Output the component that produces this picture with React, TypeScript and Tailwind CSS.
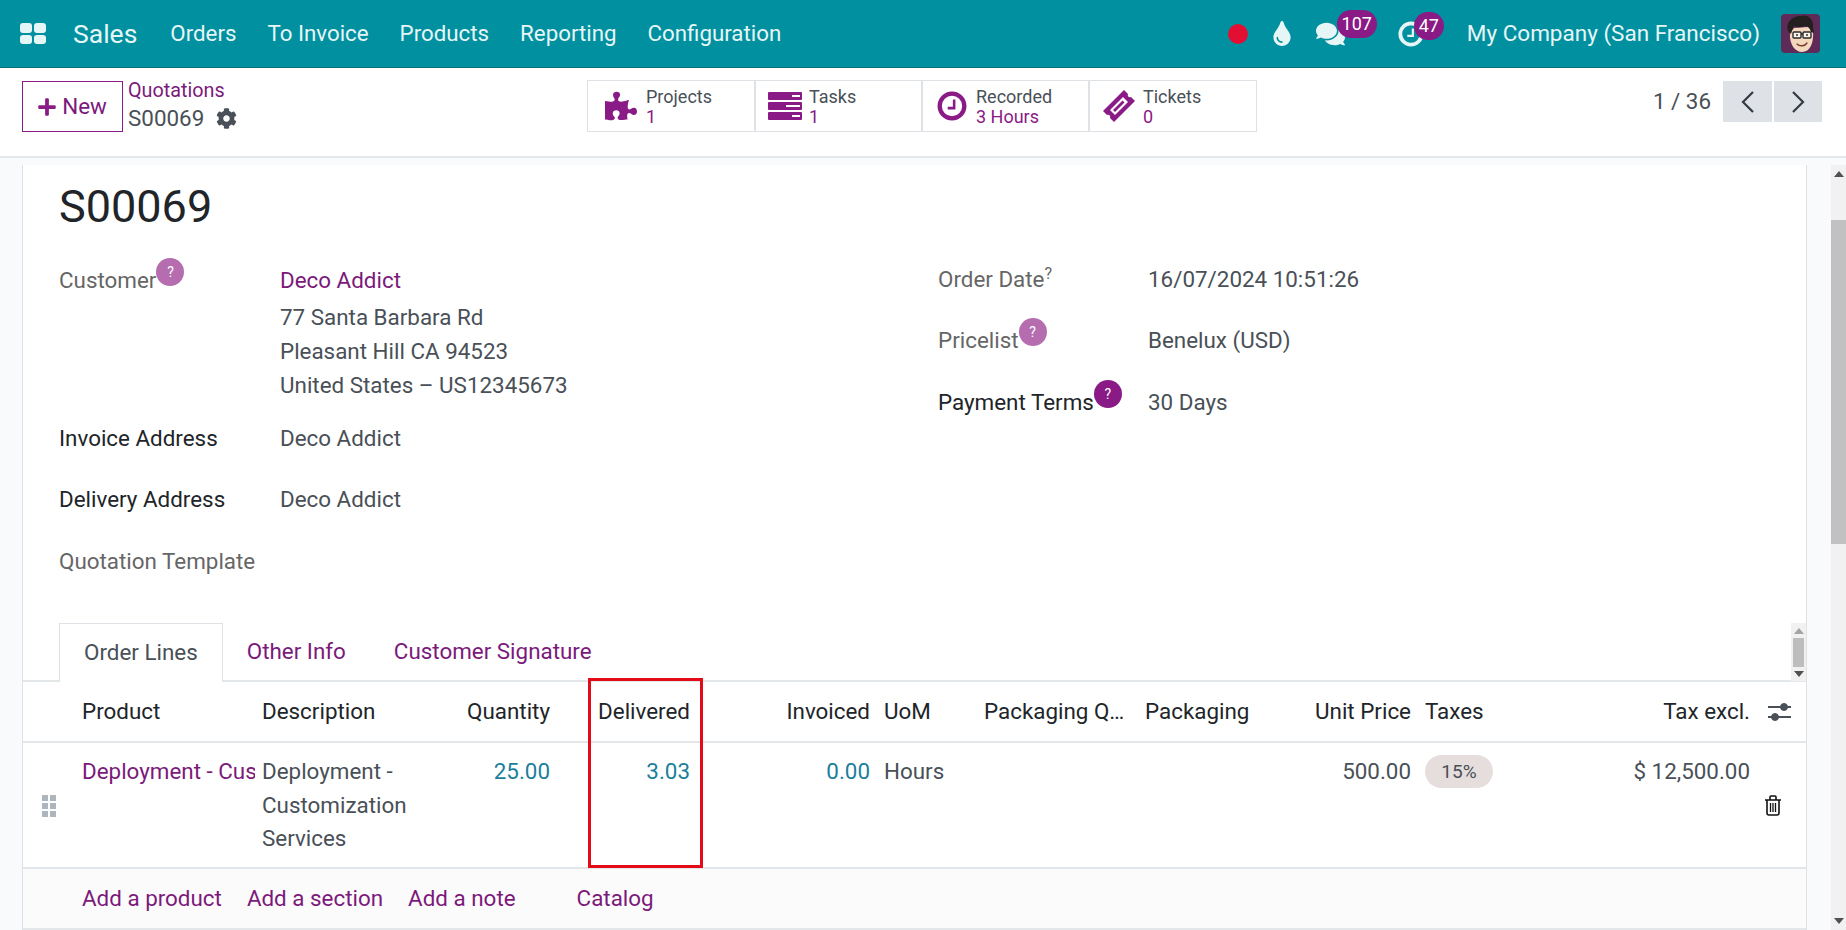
import { FaCog, FaComments, FaPlus, FaPuzzlePiece, FaTint } from "react-icons/fa";

const navItems = ["Orders", "To Invoice", "Products", "Reporting", "Configuration"];

function AppsIcon() {
  return (
    <div className="grid w-[26px] h-[21px] grid-cols-2 gap-[2px]">
      <span className="rounded-[3px] bg-[#e6f6f7]" />
      <span className="rounded-[3px] bg-[#e6f6f7]" />
      <span className="rounded-[3px] bg-[#e6f6f7]" />
      <span className="rounded-[3px] bg-[#e6f6f7]" />
    </div>
  );
}

function Avatar() {
  return (
    <svg viewBox="0 0 39 39" className="w-[39px] h-[39px]">
      <rect width="39" height="39" rx="4" fill="#5e2a58" />
      <path d="M9 19 C8 30 14 38 21 38 C29 38 33 29 32 17 L27 13 L13 14 Z" fill="#f4d8bd" />
      <path d="M7 17 C4 8 12 1 21 2 C26 0 33 5 32 13 L33 19 L30 18 C29 14 27 12 24 12 C20 14 15 13 13 12 C12 14 11 16 10 20 Z" fill="#23201f" />
      <rect x="12" y="18" width="8" height="6" rx="1" fill="#f8f3ea" stroke="#2a2a2a" strokeWidth="1.4" />
      <rect x="22" y="18" width="8" height="6" rx="1" fill="#f8f3ea" stroke="#2a2a2a" strokeWidth="1.4" />
      <path d="M20 20 H22" stroke="#2a2a2a" strokeWidth="1.4" />
      <circle cx="16" cy="21" r="1" fill="#333" />
      <circle cx="26" cy="21" r="1" fill="#333" />
      <path d="M16 30 C19 33 24 32 26 29" stroke="#7a3b2e" strokeWidth="1.4" fill="none" strokeLinecap="round" />
    </svg>
  );
}

function TasksIcon() {
  return (
    <svg viewBox="0 0 34 28" className="w-[34px] h-[28px]" fill="#8a1a85">
      <path fillRule="evenodd" d="M1 0 H33 a1 1 0 0 1 1 1 V7 a1 1 0 0 1 -1 1 H1 a1 1 0 0 1 -1 -1 V1 a1 1 0 0 1 1 -1 Z M24 3 V5 H32 V3 Z" />
      <path fillRule="evenodd" d="M1 10 H33 a1 1 0 0 1 1 1 V17 a1 1 0 0 1 -1 1 H1 a1 1 0 0 1 -1 -1 V11 a1 1 0 0 1 1 -1 Z M18 13 V15 H32 V13 Z" />
      <path fillRule="evenodd" d="M1 20 H33 a1 1 0 0 1 1 1 V27 a1 1 0 0 1 -1 1 H1 a1 1 0 0 1 -1 -1 V21 a1 1 0 0 1 1 -1 Z M24 23 V25 H32 V23 Z" />
    </svg>
  );
}

function ClockIcon({ color, className }: { color: string; className: string }) {
  return (
    <svg viewBox="0 0 28 28" className={className} fill="none" stroke={color}>
      <circle cx="14" cy="14" r="11.5" strokeWidth="4" />
      <path d="M16 8 V16 H10" strokeWidth="2.4" />
    </svg>
  );
}

function TicketIcon() {
  return (
    <svg viewBox="0 0 34 34" className="w-[34px] h-[34px]">
      <path
        fill="#8a1a85"
        fillRule="evenodd"
        d="M22 1 L26 5 C25 7 27 9 29 8 L33 12 L12 33 L8 29 C9 27 7 25 5 26 L1 22 Z M21 8 L8 21 L13 26 L26 13 Z"
      />
      <path fill="#8a1a85" d="M20.5 11.5 L11 21 L13 23 L22.5 13.5 Z" />
    </svg>
  );
}

function StatButton({
  icon,
  label,
  value,
  tight,
  className,
}: {
  icon: React.ReactNode;
  label: string;
  value: string;
  tight?: boolean;
  className: string;
}) {
  return (
    <div className={`flex h-full items-center border-r-2 border-[#dee2e6] last:border-r-0 ${className}`}>
      <div className="flex w-[58px] shrink-0 justify-center">{icon}</div>
      <div className={`flex flex-col pt-[2px] text-[18px] leading-[20px] ${tight ? "-ml-[5px]" : ""}`}>
        <span className="text-[#495057]">{label}</span>
        <span className="text-[#8a1a85]">{value}</span>
      </div>
    </div>
  );
}

function HelpBadge({ light }: { light?: boolean }) {
  return (
    <span
      className={`inline-flex h-[28px] w-[28px] -translate-y-[11px] items-center justify-center rounded-full text-[14px] text-white ${
        light ? "bg-[#b56db0]" : "bg-[#8a1a85]"
      }`}
    >
      ?
    </span>
  );
}

function Cell({ className, children }: { className?: string; children?: React.ReactNode }) {
  return <div className={`px-[7px] ${className ?? ""}`}>{children}</div>;
}

function Triangle({ up, className }: { up?: boolean; className?: string }) {
  return (
    <svg viewBox="0 0 10 6" className={`w-[10px] h-[6px] ${className ?? ""}`} fill="currentColor">
      <path d={up ? "M5 0 L10 6 H0 Z" : "M0 0 H10 L5 6 Z"} />
    </svg>
  );
}

const columns =
  "grid grid-cols-[52px_180px_170px_132px_140px_180px_100px_161px_152px_128px_110px_229px_50px]";

export default function App() {
  return (
    <div className="flex h-[930px] w-[1846px] flex-col overflow-hidden bg-white font-['Roboto',sans-serif] text-[22.4px] text-[#495057]">
      {/* top navbar */}
      <header className="flex h-[68px] shrink-0 items-center border-b border-[#00707c] bg-[#00909f] pl-[20px] text-[#e6f6f7]">
        <AppsIcon />
        <span className="ml-[27px] mr-[33px] text-[26.5px]">Sales</span>
        <nav className="flex gap-[31px] text-[22.3px]">
          {navItems.map((item) => (
            <span key={item}>{item}</span>
          ))}
        </nav>
        <div className="ml-auto flex items-center pr-[26px]">
          <span className="-mr-[1px] h-[20px] w-[20px] rounded-full bg-[#e30f33]" />
          <FaTint className="ml-[26px] h-[25px] w-[18px]" />
          <div className="relative ml-[25px] h-[26px] w-[29px]">
            <FaComments className="h-[26px] w-[29px]" />
            <span className="absolute -top-[11px] left-[21px] flex h-[28px] w-[40px] items-center justify-center rounded-full bg-[#8a1a85] text-[18px] text-white">
              107
            </span>
          </div>
          <div className="relative ml-[53px] h-[26px] w-[26px]">
            <ClockIcon color="#e6f6f7" className="h-[26px] w-[26px]" />
            <span className="absolute -top-[9px] left-[16px] flex h-[28px] w-[30px] items-center justify-center rounded-full bg-[#8a1a85] text-[18px] text-white">
              47
            </span>
          </div>
          <span className="ml-[43px] mr-[21px] text-[22.5px]">My Company (San Francisco)</span>
          <Avatar />
        </div>
      </header>

      {/* control panel */}
      <div className="relative flex h-[90px] shrink-0 items-start border-b-2 border-[#e4e7ea] bg-white pl-[22px] pt-[13px]">
        <button className="flex h-[51px] w-[101px] items-center justify-center gap-[5px] border border-[#8a1a85] pr-[1px] text-[22.4px] text-[#7b1a7b]">
          <FaPlus className="h-[20px] w-[20px] text-[#8a1a85]" />
          New
        </button>
        <div className="ml-[5px] -mt-[2px] flex flex-col">
          <a className="text-[19.8px] leading-[24px] text-[#7b1a7b]">Quotations</a>
          <div className="mt-[1px] flex items-center gap-[12px] leading-[28px]">
            S00069
            <FaCog className="h-[21px] w-[21px]" />
          </div>
        </div>
        <div className="absolute left-[587px] top-[12px] flex h-[52px] w-[670px] border border-[#dee2e6]">
          <StatButton className="w-[168px]" icon={<FaPuzzlePiece className="ml-[7px] h-[32px] w-[32px] text-[#8a1a85]" />} label="Projects" value="1" />
          <StatButton className="w-[167px]" tight icon={<TasksIcon />} label="Tasks" value="1" />
          <StatButton className="w-[167px]" tight icon={<ClockIcon color="#8a1a85" className="h-[30px] w-[30px]" />} label="Recorded" value="3 Hours" />
          <StatButton className="w-[166px]" tight icon={<TicketIcon />} label="Tickets" value="0" />
        </div>
        <div className="ml-auto mr-[24px] flex items-center">
          <span className="mr-[12px]">1 / 36</span>
          <div className="flex gap-[2px]">
            <div className="flex h-[41px] w-[49px] items-center justify-center bg-[#dee2e6]">
              <svg viewBox="0 0 14 24" className="h-[24px] w-[14px]" fill="none" stroke="#343a40" strokeWidth="2.2">
                <path d="M12 2 L2 12 L12 22" />
              </svg>
            </div>
            <div className="flex h-[41px] w-[48px] items-center justify-center bg-[#dee2e6]">
              <svg viewBox="0 0 14 24" className="h-[24px] w-[14px]" fill="none" stroke="#343a40" strokeWidth="2.2">
                <path d="M2 2 L12 12 L2 22" />
              </svg>
            </div>
          </div>
        </div>
      </div>

      {/* content + page scrollbar */}
      <div className="flex min-h-0 flex-1 bg-[#f9fafb] pt-[7px]">
        <main className="ml-[22px] mr-[24px] w-[1785px] shrink-0 overflow-hidden border-x border-[#dee2e6] bg-white">
          <h1 className="pl-[36px] pt-[16px] text-[45px] leading-[52px] text-[#212529]">S00069</h1>

          <div className="mt-[29px] flex pl-[36px]">
            {/* left fields */}
            <div className="w-[879px]">
              <div className="flex">
                <div className="w-[221px] leading-[36px] text-[#666]">
                  Customer
                  <HelpBadge light />
                </div>
                <div>
                  <div className="leading-[36px] text-[#7b1a7b]">Deco Addict</div>
                  <div className="mt-[2px] leading-[34px]">
                    <div>77 Santa Barbara Rd</div>
                    <div>Pleasant Hill CA 94523</div>
                    <div>United States – US12345673</div>
                  </div>
                </div>
              </div>
              <div className="mt-[18px] flex leading-[36px]">
                <div className="w-[221px] text-[#212529]">Invoice Address</div>
                <div>Deco Addict</div>
              </div>
              <div className="mt-[25px] flex leading-[36px]">
                <div className="w-[221px] text-[#212529]">Delivery Address</div>
                <div>Deco Addict</div>
              </div>
              <div className="mt-[26px] leading-[36px] text-[#666]">Quotation Template</div>
            </div>
            {/* right fields */}
            <div className="-mt-[1px]">
              <div className="flex leading-[36px]">
                <div className="w-[210px] text-[#666]">
                  Order Date<sup className="text-[16px]">?</sup>
                </div>
                <div>16/07/2024 10:51:26</div>
              </div>
              <div className="mt-[25px] flex leading-[36px]">
                <div className="w-[210px] text-[#666]">
                  Pricelist
                  <HelpBadge light />
                </div>
                <div>Benelux (USD)</div>
              </div>
              <div className="mt-[26px] flex leading-[36px]">
                <div className="w-[210px] text-[#212529]">
                  Payment Terms
                  <HelpBadge />
                </div>
                <div>30 Days</div>
              </div>
            </div>
          </div>

          {/* tabs */}
          <div className="relative mt-[44px] flex h-[59px] border-b-2 border-[#e4e7ea] pl-[36px]">
            <div className="flex h-[59px] items-center border-x border-t border-[#dee2e6] bg-white px-[24px]">Order Lines</div>
            <div className="flex items-center pl-[24px] pr-[24px] pt-[1px] text-[#7b1a7b]">Other Info</div>
            <div className="flex items-center pl-[24px] pt-[1px] text-[#7b1a7b]">Customer Signature</div>
            <div className="absolute right-0 top-0 flex h-[58px] w-[15px] flex-col items-center bg-[#f1f1f1] pt-[5px]">
              <Triangle up className="text-[#a3a3a3]" />
              <div className="mt-[4px] h-[29px] w-[11px] bg-[#bdbdbd]" />
              <Triangle className="mt-[4px] text-[#505050]" />
            </div>
          </div>

          {/* order lines */}
          <div className="relative">
            <div className={`${columns} h-[61px] items-center border-b-2 border-[#e4e7ea] text-[#212529]`}>
              <Cell />
              <Cell>Product</Cell>
              <Cell>Description</Cell>
              <Cell className="text-right">Quantity</Cell>
              <Cell className="text-right">Delivered</Cell>
              <Cell className="text-right">Invoiced</Cell>
              <Cell>UoM</Cell>
              <Cell className="overflow-hidden text-ellipsis whitespace-nowrap">Packaging Quantity</Cell>
              <Cell>Packaging</Cell>
              <Cell className="text-right">Unit Price</Cell>
              <Cell>Taxes</Cell>
              <Cell className="text-right">Tax excl.</Cell>
              <div className="flex justify-start pl-[11px]">
                <svg viewBox="0 0 23 20" className="h-[20px] w-[23px]" fill="#495057" stroke="#495057">
                  <path d="M0 5 H23 M0 15 H23" strokeWidth="2" />
                  <circle cx="16" cy="5" r="3.5" />
                  <circle cx="7" cy="15" r="3.5" />
                </svg>
              </div>
            </div>
            <div className={`${columns} h-[126px] border-b-2 border-[#e4e7ea] pt-[12px] leading-[33.5px]`}>
              <div className="flex h-[101px] items-center pl-[19px]">
                <div className="grid w-[14px] grid-cols-2 gap-[2px]">
                  {[0, 1, 2, 3, 4, 5].map((n) => (
                    <span key={n} className="h-[6px] w-[6px] bg-[#adb5bd]" />
                  ))}
                </div>
              </div>
              <Cell className="overflow-hidden whitespace-nowrap pr-0 text-[#7b1a7b]">Deployment - Customization Services</Cell>
              <Cell>Deployment - Customization Services</Cell>
              <Cell className="text-right text-[#1b7f9b]">25.00</Cell>
              <Cell className="text-right text-[#1b7f9b]">3.03</Cell>
              <Cell className="text-right text-[#1b7f9b]">0.00</Cell>
              <Cell>Hours</Cell>
              <Cell />
              <Cell />
              <Cell className="text-right">500.00</Cell>
              <Cell>
                <span className="flex h-[33px] w-[68px] items-center justify-center rounded-full bg-[#e6dddd] text-[19px]">15%</span>
              </Cell>
              <Cell className="text-right">$ 12,500.00</Cell>
              <div className="flex h-[101px] items-center pl-[7px]">
                <svg viewBox="0 0 18 21" className="h-[21px] w-[18px]" fill="none" stroke="#111" strokeWidth="1.6">
                  <path d="M1 5 H17 M6 5 V2 a1 1 0 0 1 1 -1 H11 a1 1 0 0 1 1 1 V5 M3 5 V18 a2 2 0 0 0 2 2 H13 a2 2 0 0 0 2 -2 V5" />
                  <path d="M6.5 8 V17 M9 8 V17 M11.5 8 V17" strokeWidth="1.3" />
                </svg>
              </div>
            </div>
            {/* footer links */}
            <div className="flex h-[61px] items-center border-b-2 border-[#e4e7ea] bg-[#fbfbfb] pl-[59px] text-[#7b1a7b]">
              <span>Add a product</span>
              <span className="ml-[25px]">Add a section</span>
              <span className="ml-[25px]">Add a note</span>
              <span className="ml-[61px]">Catalog</span>
            </div>
            {/* red highlight */}
            <div className="absolute left-[565px] -top-[4px] h-[190px] w-[115px] border-[3px] border-[#e30b17]" />
          </div>
        </main>

        {/* page scrollbar */}
        <div className="flex w-[15px] shrink-0 flex-col items-center bg-[#f1f1f1] pt-[6px]">
          <Triangle up className="text-[#505050]" />
          <div className="mt-[43px] h-[324px] w-full bg-[#c1c1c1]" />
          <Triangle className="mt-auto mb-[6px] text-[#505050]" />
        </div>
      </div>
    </div>
  );
}
